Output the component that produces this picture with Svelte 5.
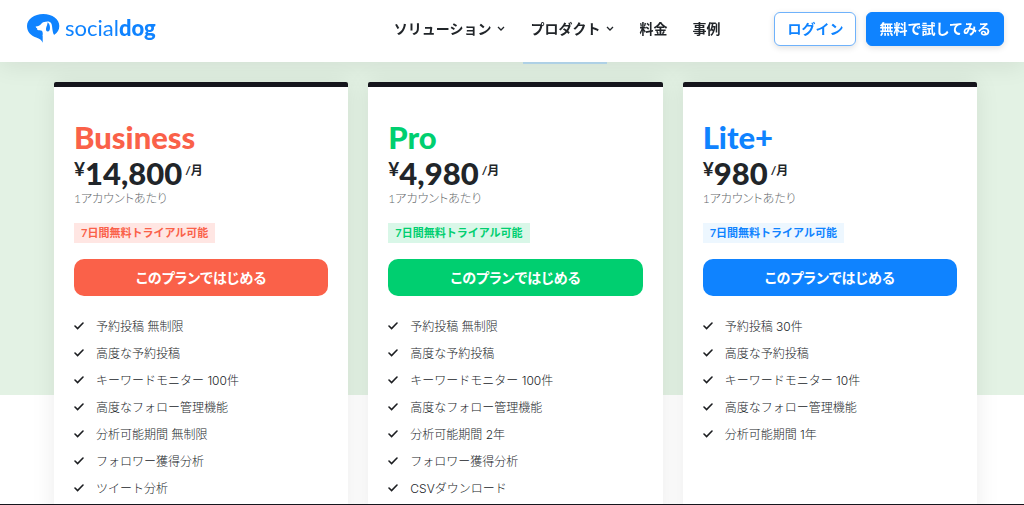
<script lang="ts">
  type Plan = {
    id: string;
    name: string;
    price: string;
    features: string[];
  };

  const nav = [
    { label: 'ソリューション', menu: true },
    { label: 'プロダクト', menu: true },
    { label: '料金', menu: false },
    { label: '事例', menu: false }
  ];

  const plans: Plan[] = [
    {
      id: 'business',
      name: 'Business',
      price: '14,800',
      features: [
        '予約投稿 無制限',
        '高度な予約投稿',
        'キーワードモニター 100件',
        '高度なフォロー管理機能',
        '分析可能期間 無制限',
        'フォロワー獲得分析',
        'ツイート分析'
      ]
    },
    {
      id: 'pro',
      name: 'Pro',
      price: '4,980',
      features: [
        '予約投稿 無制限',
        '高度な予約投稿',
        'キーワードモニター 100件',
        '高度なフォロー管理機能',
        '分析可能期間 2年',
        'フォロワー獲得分析',
        'CSVダウンロード'
      ]
    },
    {
      id: 'lite',
      name: 'Lite+',
      price: '980',
      features: [
        '予約投稿 30件',
        '高度な予約投稿',
        'キーワードモニター 10件',
        '高度なフォロー管理機能',
        '分析可能期間 1年'
      ]
    }
  ];
</script>

<header>
  <a class="logo" href="/" aria-label="socialdog">
    <svg width="33" height="30" viewBox="0 0 33 30" aria-hidden="true">
      <path
        fill="#0f83ff"
        d="M16.300 0C25.500 0 32.300 5.200 32.300 12c0 3.700-1.800 6.600-4.900 8.800H15.700v8c-1-2.500-3-4-6.500-5.200C3.800 21.700 0 17.600 0 12 0 5.200 7.200 0 16.300 0z"
      />
      <path
        fill="#fff"
        d="M8.700 12.500c2.600-.4 4.200-1.200 5.400-2.600 1.300-1.600 3-2.400 5.200-2.200 1.900-.4 3.900-.1 5 1.700 1.300 2.500.6 7 2.600 11.400l.6 1H15.700c.2-2.100.1-3.600-.8-5-1.400-.5-2.900-.1-4.200-.8-.7-.5-.5-1.200-.5-1.600-.7-.4-1.500-1-1.500-1.900z"
      />
      <path fill="#0f83ff" d="M20.600 8.300c1.900 1.300 2.700 4 2.300 6.800-.3 1.600-1 2.400-2.100 2.300-1.300-.1-2-1.100-1.800-2.700.3-2.200 1.500-3.600 1.600-6.400z" />
    </svg>
    <span>social<b>dog</b></span>
  </a>

  <nav>
    {#each nav as item}
      <a href="/">
        {item.label}
        {#if item.menu}
          <svg width="8" height="6" viewBox="0 0 8 6" aria-hidden="true">
            <path d="M1 1l3 3 3-3" fill="none" stroke="currentColor" stroke-width="1.300" />
          </svg>
        {/if}
      </a>
    {/each}
  </nav>

  <div class="actions">
    <a class="login" href="/">ログイン</a>
    <a class="trial" href="/">無料で試してみる</a>
  </div>
</header>

<main>
  <div class="tabs">
    <span></span>
    <span class="active"></span>
  </div>
  <div class="plans">
    {#each plans as plan}
      <section class="card {plan.id}">
        <h2>{plan.name}</h2>
        <p class="price">
          <span class="yen">¥</span><strong>{plan.price}</strong><span class="month">/月</span>
        </p>
        <p class="per">1アカウントあたり</p>
        <span class="badge">7日間無料トライアル可能</span>
        <button type="button">このプランではじめる</button>
        <ul>
          {#each plan.features as feature}
            <li>
              <svg width="10" height="10" viewBox="0 0 10 10" aria-hidden="true">
                <path d="M1 4l2.600 2.600L9 1" fill="none" stroke="#1c1e21" stroke-width="1.600" stroke-linecap="round" />
              </svg>
              {feature}
            </li>
          {/each}
        </ul>
      </section>
    {/each}
  </div>
</main>

<div class="bottom-bar"></div>

<style>
  :global(body) {
    margin: 0;
    overflow: hidden;
    background: #fff;
    color: #212529;
    font-family: Lato, 'Noto Sans CJK JP', sans-serif;
  }

  a {
    color: inherit;
    text-decoration: none;
  }

  header {
    position: fixed;
    top: 0;
    left: 0;
    right: 0;
    z-index: 10;
    box-sizing: border-box;
    height: 62px;
    padding: 0 20px 4px 27px;
    display: flex;
    align-items: center;
    background: #fff;
    box-shadow: 0 4px 24px rgba(0, 0, 0, 0.08);
  }

  .logo {
    display: flex;
    align-items: center;
    gap: 5px;
    color: #0f83ff;
    font-size: 22px;
    line-height: 30px;
    font-weight: 400;
  }

  .logo span {
    padding-bottom: 2px;
  }

  .logo b {
    font-weight: 900;
  }

  nav {
    display: flex;
    gap: 25px;
    margin-left: auto;
    font-size: 14px;
    line-height: 20px;
    font-weight: 700;
  }

  nav a {
    display: flex;
    align-items: center;
    gap: 6px;
  }

  .actions {
    display: flex;
    gap: 10px;
    margin-left: 54px;
    font-size: 14px;
    font-weight: 700;
  }

  .actions a {
    box-sizing: border-box;
    height: 34px;
    padding: 0 12px;
    border: 1px solid #6fb2fb;
    border-radius: 6px;
    line-height: 32px;
    box-shadow: 0 2px 6px rgba(0, 0, 0, 0.12);
  }

  .login {
    color: #0f83ff;
    background: #fff;
  }

  .actions .trial {
    border-color: #0f83ff;
    color: #fff;
    background: #0f83ff;
  }

  main {
    padding: 62px 47px 0 54px;
    background: linear-gradient(#e3f2e4 395px, #fff 395px);
  }

  .tabs {
    display: flex;
    justify-content: center;
    gap: 14px;
    margin-bottom: 18px;
  }

  .tabs span {
    width: 84px;
    height: 2px;
  }

  .tabs .active {
    background: #b8dcf2;
  }

  .plans {
    display: grid;
    grid-template-columns: repeat(3, 1fr);
    gap: 20px;
  }

  .card {
    --accent: #0f83ff;
    --tint: #edf7ff;
    padding: 31px 20px 20px;
    border-top: 5px solid #16161d;
    border-radius: 2px;
    background: #fff;
    box-shadow: 0 0 24px rgba(0, 0, 0, 0.08);
  }

  .business {
    --accent: #fa6149;
    --tint: #ffe6e3;
  }

  .pro {
    --accent: #00cf70;
    --tint: #d9f7e8;
  }

  h2 {
    margin: 0;
    color: var(--accent);
    font-size: 31px;
    line-height: 38px;
    font-weight: 900;
  }

  .price {
    display: flex;
    align-items: flex-start;
    margin: 0;
    height: 34px;
    font-weight: 700;
  }

  .price strong {
    font-size: 31px;
    line-height: 34px;
    font-weight: 900;
  }

  .yen {
    font-size: 19px;
    line-height: 26px;
  }

  .month {
    margin-left: 3px;
    font-size: 12px;
    line-height: 30px;
  }

  .per {
    margin: 0 0 15px;
    color: #666a6d;
    font-size: 12px;
    line-height: 18px;
    font-weight: 300;
    font-feature-settings: 'palt';
  }

  .badge {
    display: table;
    padding: 0 7px;
    color: var(--accent);
    background: var(--tint);
    font-size: 11px;
    line-height: 20px;
    font-weight: 700;
  }

  button {
    display: block;
    width: 100%;
    height: 37px;
    margin: 16px 0 17px;
    padding: 0 0 2px;
    border: 0;
    border-radius: 10px;
    color: #fff;
    background: var(--accent);
    font: inherit;
    font-size: 14px;
    font-weight: 700;
    font-feature-settings: 'palt';
  }

  ul {
    margin: 0;
    padding: 0;
    list-style: none;
  }

  li {
    display: flex;
    align-items: center;
    gap: 12px;
    color: #212529;
    font-family: Inter, 'Noto Sans CJK JP', sans-serif;
    font-size: 12px;
    line-height: 27px;
    font-weight: 300;
  }

  .bottom-bar {
    position: fixed;
    left: 0;
    right: 0;
    bottom: 0;
    z-index: 20;
    height: 1px;
    background: #16161d;
  }
</style>
